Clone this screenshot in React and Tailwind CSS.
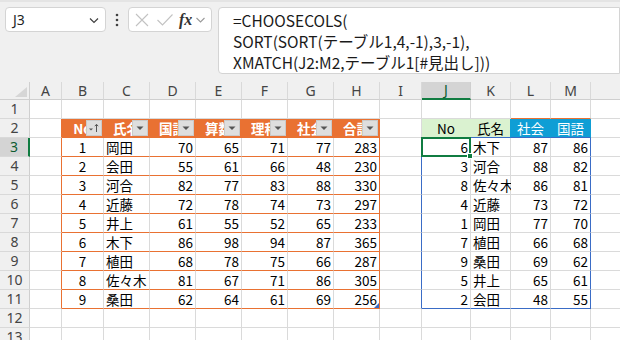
import React from "react";

const H1 = ["No", "氏名", "国語", "算数", "理科", "社会", "合計"];
const T1 = [
  [1, "岡田", 70, 65, 71, 77, 283],
  [2, "会田", 55, 61, 66, 48, 230],
  [3, "河合", 82, 77, 83, 88, 330],
  [4, "近藤", 72, 78, 74, 73, 297],
  [5, "井上", 61, 55, 52, 65, 233],
  [6, "木下", 86, 98, 94, 87, 365],
  [7, "植田", 68, 78, 75, 66, 287],
  [8, "佐々木", 81, 67, 71, 86, 305],
  [9, "桑田", 62, 64, 61, 69, 256],
];
const T2 = [
  [6, "木下", 87, 86],
  [3, "河合", 88, 82],
  [8, "佐々木", 86, 81],
  [4, "近藤", 73, 72],
  [1, "岡田", 77, 70],
  [7, "植田", 66, 68],
  [9, "桑田", 69, 62],
  [5, "井上", 65, 61],
  [2, "会田", 48, 55],
];
const LETTERS = ["A", "B", "C", "D", "E", "F", "G", "H", "I", "J", "K", "L", "M", "N"];
const ROWS = [1, 2, 3, 4, 5, 6, 7, 8, 9, 10, 11, 12, 13];

function rightColor(r, c) {
  if (c === 0 && r >= 2 && r <= 11) return "border-r-[#E97132]";
  if (c >= 1 && c <= 6 && r === 2) return "border-r-[#E97132]";
  if (c === 7 && r >= 2 && r <= 11) return "border-r-[#E97132]";
  if (c === 8 && r >= 3 && r <= 11) return "border-r-[#3a6cc6]";
  if (c === 9 && r === 2) return "border-r-[#daf2d0]";
  if (c === 10 && r === 2) return "border-r-[#0f9ed5]";
  if (c === 11 && r === 2) return "border-r-[#0f9ed5]";
  if (c === 12 && r === 2) return "border-r-[#0f9ed5]";
  if (c === 12 && r >= 3 && r <= 11) return "border-r-[#3a6cc6]";
  return "border-r-[#dadada]";
}

function bottomColor(r, c) {
  if (c >= 1 && c <= 7 && r >= 2 && r <= 11) return "border-b-[#E97132]";
  if ((c === 11 || c === 12) && r === 1) return "border-b-[#E97132]";
  if (c >= 9 && c <= 12 && (r === 2 || r === 11)) return "border-b-[#3a6cc6]";
  return "border-b-[#dadada]";
}

function bg(r, c) {
  if (r === 2 && c >= 1 && c <= 7) return "bg-[#E97132]";
  if (r === 2 && (c === 9 || c === 10)) return "bg-[#daf2d0]";
  if (r === 2 && (c === 11 || c === 12)) return "bg-[#0f9ed5]";
  return "bg-white";
}

function FilterButton({ sorted }) {
  return (
    <div className="absolute right-[1px] top-[1px] w-[16px] h-[16px] bg-[#dedede] border border-[#cacaca] flex items-center justify-center z-10">
      {sorted ? (
        <svg width="12" height="12" viewBox="0 0 12 12">
          <path d="M1 6.5 L5 6.5 L3 8.5 Z" fill="#555" />
          <path d="M8.5 10 L8.5 2.5 M6.8 4.2 L8.5 2.3 L10.2 4.2" stroke="#555" strokeWidth="1" fill="none" />
        </svg>
      ) : (
        <svg width="10" height="10" viewBox="0 0 10 10">
          <path d="M1.5 3.5 L8.5 3.5 L5 7 Z" fill="#555" />
        </svg>
      )}
    </div>
  );
}

function cellContent(r, c) {
  if (r === 2 && c >= 1 && c <= 7) {
    return (
      <>
        <div className="w-full text-center font-bold text-white">{H1[c - 1]}</div>
        <FilterButton sorted={c === 1} />
      </>
    );
  }
  if (r >= 3 && r <= 11 && c >= 1 && c <= 7) {
    const v = T1[r - 3][c - 1];
    if (c === 1) return <div className="w-full text-center">{v}</div>;
    if (c === 2) return <div className="w-full text-left pl-[2px]">{v}</div>;
    return (
      <>
        <div className="w-full text-right pr-[2px]">{v}</div>
        {r === 11 && c === 7 ? (
          <svg className="absolute right-[0px] bottom-[0px] z-10" width="5" height="5" viewBox="0 0 5 5">
            <path d="M5 0 L5 5 L0 5 Z" fill="#3a6cc6" />
          </svg>
        ) : null}
      </>
    );
  }
  if (r === 2 && c >= 9 && c <= 12) {
    const labels = ["No", "氏名", "社会", "国語"];
    return (
      <div className={c >= 11 ? "w-full text-center text-white" : "w-full text-center text-black"}>
        {labels[c - 9]}
      </div>
    );
  }
  if (r >= 3 && r <= 11 && c >= 9 && c <= 12) {
    const v = T2[r - 3][c - 9];
    const node =
      c === 10 ? (
        <div className="w-full text-left pl-[2px]">{v}</div>
      ) : (
        <div className="w-full text-right pr-[2px]">{v}</div>
      );
    if (r === 3 && c === 9) {
      return (
        <>
          {node}
          <div className="absolute left-[-1px] top-[-1px] w-[50px] h-[20px] border-2 border-[#107c41] z-20 pointer-events-none" />
          <div className="absolute right-[-3px] bottom-[-3px] w-[6px] h-[6px] bg-[#107c41] border border-white z-30" />
        </>
      );
    }
    return node;
  }
  return null;
}

export default function App() {
  return (
    <div
      className="w-[620px] h-[340px] overflow-hidden bg-[#f0f0f0] text-black"
      style={{ fontFamily: '"Noto Sans CJK JP", "Noto Sans", sans-serif' }}
    >
      {/* Toolbar */}
      <div className="h-[82px] border-t-2 border-t-[#e4e4e4] flex items-start pt-[5px] pl-[5px]">
        <div className="w-[101px] h-[25px] bg-white border border-[#d4d4d4] rounded-[4px] flex items-center justify-between pl-[7px] pr-[5px]">
          <span className="text-[14px] leading-none text-[#1f1f1f]" style={{ fontFamily: '"Noto Sans", sans-serif' }}>J3</span>
          <svg width="12" height="12" viewBox="0 0 12 12">
            <path d="M2 4.5 L6 8.5 L10 4.5" stroke="#404040" strokeWidth="1.2" fill="none" />
          </svg>
        </div>
        <div className="w-[22px] h-[25px] flex items-center justify-center">
          <svg width="4" height="14" viewBox="0 0 4 14">
            <circle cx="2" cy="2" r="1.3" fill="#404040" />
            <circle cx="2" cy="7" r="1.3" fill="#404040" />
            <circle cx="2" cy="12" r="1.3" fill="#404040" />
          </svg>
        </div>
        <div className="w-[84px] h-[25px] bg-white border border-[#d4d4d4] rounded-[4px] flex items-center pl-[4px]">
          <svg width="16" height="16" viewBox="0 0 16 16" className="ml-[1px]">
            <path d="M2 2 L14 14 M14 2 L2 14" stroke="#c2c2c2" strokeWidth="1.1" fill="none" />
          </svg>
          <svg width="18" height="16" viewBox="0 0 18 16" className="ml-[6px]">
            <path d="M1.5 8 L6.5 13 L16.5 2.5" stroke="#c2c2c2" strokeWidth="1.1" fill="none" />
          </svg>
          <span
            className="ml-[5px] text-[16px] leading-none italic font-bold text-[#333]"
            style={{ fontFamily: '"Liberation Serif", serif' }}
          >
            fx
          </span>
          <svg width="11" height="10" viewBox="0 0 11 10" className="ml-[3px]">
            <path d="M1.5 3 L5.5 7 L9.5 3" stroke="#9a9a9a" strokeWidth="1.1" fill="none" />
          </svg>
        </div>
        <div className="ml-[6px] flex-1 h-[67px] bg-white border border-[#d4d4d4] rounded-l-[4px] pl-[14px] pt-[2px] text-[15.5px] leading-[21px] text-[#1a1a1a]">
          <div>=CHOOSECOLS(</div>
          <div>SORT(SORT(テーブル1,4,-1),3,-1),</div>
          <div>XMATCH(J2:M2,テーブル1[#見出し]))</div>
        </div>
      </div>

      {/* Sheet */}
      <div className="grid grid-cols-[30px_32px_42px_46px_46px_46px_46px_46px_46px_42px_49px_40px_40px_40px_140px] text-[13.5px] leading-[18px]">
        {/* column headers */}
        <div className="h-[18px] bg-[#f0f0f0] border-r border-r-[#cfcfcf] border-b border-b-[#cfcfcf] relative">
          <svg className="absolute left-[15px] top-[5px]" width="12" height="10" viewBox="0 0 12 10">
            <path d="M12 0 L12 10 L0 10 Z" fill="#d6d6d6" />
          </svg>
        </div>
        {LETTERS.map((l) =>
          l === "J" ? (
            <div
              key={l}
              className="h-[18px] bg-[#d4d4d4] border-r border-r-[#cfcfcf] border-b-2 border-b-[#107c41] flex items-center justify-center text-[14px] text-[#0e5c32]"
              style={{ fontFamily: '"Noto Sans", sans-serif' }}
            >
              {l}
            </div>
          ) : (
            <div
              key={l}
              className="h-[18px] bg-[#f0f0f0] border-r border-r-[#d9d9d9] border-b border-b-[#cfcfcf] flex items-center justify-center text-[14px] text-[#444]"
              style={{ fontFamily: '"Noto Sans", sans-serif' }}
            >
              {l}
            </div>
          )
        )}
        {ROWS.map((r) => (
          <React.Fragment key={r}>
            {r === 3 ? (
              <div
                className="h-[19px] bg-[#d4d4d4] border-r-2 border-r-[#107c41] border-b border-b-[#d9d9d9] flex items-center justify-center text-[14px] text-[#0e5c32]"
                style={{ fontFamily: '"Noto Sans", sans-serif' }}
              >
                {r}
              </div>
            ) : (
              <div
                className="h-[19px] bg-[#f0f0f0] border-r border-r-[#cfcfcf] border-b border-b-[#d9d9d9] flex items-center justify-center text-[14px] text-[#444]"
                style={{ fontFamily: '"Noto Sans", sans-serif' }}
              >
                {r}
              </div>
            )}
            {LETTERS.map((l, c) => (
              <div
                key={l}
                className={
                  "h-[19px] relative border-r border-b flex items-center whitespace-nowrap " +
                  rightColor(r, c) +
                  " " +
                  bottomColor(r, c) +
                  " " +
                  bg(r, c)
                }
              >
                {cellContent(r, c)}
              </div>
            ))}
          </React.Fragment>
        ))}
      </div>
    </div>
  );
}
